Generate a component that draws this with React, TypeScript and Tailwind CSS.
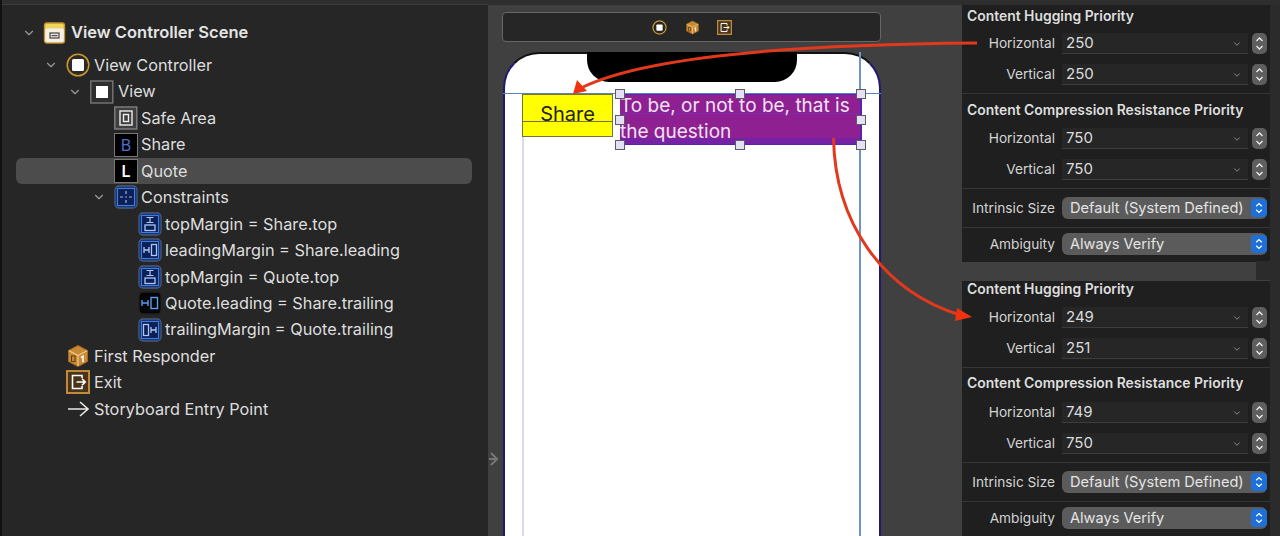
import type { ReactNode } from 'react'
import { ChevronDown } from 'lucide-react'

const font = "font-['Inter','Liberation_Sans',sans-serif]"

function Glyph({ children, size = 24 }: { children: ReactNode; size?: number }) {
  return (
    <svg width={size} height={size} viewBox="0 0 24 24" fill="none" className="shrink-0">
      {children}
    </svg>
  )
}

function SceneIcon() {
  return (
    <Glyph>
      <rect x="1.5" y="2" width="20" height="20" rx="2.5" fill="#e9cf86" stroke="#c9912c" strokeWidth="1.4" />
      <rect x="2.2" y="7.5" width="18.6" height="13.8" rx="1.5" fill="#f4f0e4" />
      <path d="M4 6.5 6 3M8.5 6.5l2-3.5M13 6.5l2-3.5M17.5 6.5l2-3.5" stroke="#f7e600" strokeWidth="1.4" />
      <rect x="7" y="12" width="9" height="5" fill="#ece7d8" stroke="#444" strokeWidth="1.2" />
      <rect x="8.5" y="14" width="6" height="1.2" fill="#555" />
    </Glyph>
  )
}

function ControllerIcon() {
  return (
    <Glyph>
      <circle cx="12" cy="12" r="10.8" fill="#2c2a24" stroke="#c9982f" strokeWidth="1.5" />
      <rect x="6" y="6" width="12" height="12" rx="1.5" fill="#fff" />
    </Glyph>
  )
}

function ViewIcon() {
  return (
    <Glyph>
      <rect x="0.8" y="1" width="22" height="22" fill="#2e2e2e" stroke="#777" strokeWidth="1.4" />
      <rect x="6" y="6" width="12" height="12" fill="#fff" />
    </Glyph>
  )
}

function SafeAreaIcon() {
  return (
    <Glyph>
      <rect x="0.8" y="1" width="22" height="22" fill="#3f3f3f" stroke="#808080" strokeWidth="1.4" />
      <rect x="6" y="5" width="12" height="14" stroke="#eee" strokeWidth="1.4" />
      <rect x="9.5" y="8.5" width="5" height="7" stroke="#eee" strokeWidth="1.4" />
    </Glyph>
  )
}

function LetterIcon({ letter, color }: { letter: string; color: string }) {
  return (
    <span
      className={`flex h-[24px] w-[24px] shrink-0 items-center justify-center border-[1.5px] border-[#777] bg-black text-[16px] ${color}`}
    >
      {letter}
    </span>
  )
}

function ConstraintBox({ children, dark }: { children: ReactNode; dark?: boolean }) {
  return (
    <Glyph>
      <rect
        x="1"
        y="1"
        width="22"
        height="22"
        rx="4"
        fill={dark ? '#050505' : '#0d1f57'}
        stroke={dark ? '#222' : '#4a5d80'}
        strokeWidth="1.3"
      />
      {!dark && <rect x="3.4" y="3.4" width="17.2" height="17.2" stroke="#3c7de0" strokeWidth="1.3" />}
      {children}
    </Glyph>
  )
}

function ConstraintsIcon() {
  return (
    <ConstraintBox>
      <path d="M12 6v3M12 15v3M6 12h3M15 12h3" stroke="#8fb4f0" strokeWidth="1.2" />
      <circle cx="12" cy="12" r="0.8" fill="#8fb4f0" />
    </ConstraintBox>
  )
}

function TopIcon() {
  return (
    <ConstraintBox>
      <path d="M8.5 5.5h7M8.5 10.5h7M12 5.5v5" stroke="#a9c8f5" strokeWidth="1.2" />
      <rect x="7" y="13" width="10" height="5.5" stroke="#a9c8f5" strokeWidth="1.3" />
    </ConstraintBox>
  )
}

function LeadingIcon() {
  return (
    <ConstraintBox>
      <path d="M6 9v6M11 9v6M6 12h5" stroke="#a9c8f5" strokeWidth="1.3" />
      <rect x="13.5" y="6.5" width="5" height="11" stroke="#a9c8f5" strokeWidth="1.3" />
    </ConstraintBox>
  )
}

function SiblingIcon() {
  return (
    <ConstraintBox dark>
      <path d="M4 9v6M10 9v6M4 12h6" stroke="#5b9bf0" strokeWidth="1.4" />
      <rect x="13" y="6.5" width="6.5" height="11" stroke="#5b9bf0" strokeWidth="1.4" />
    </ConstraintBox>
  )
}

function TrailingIcon() {
  return (
    <ConstraintBox>
      <rect x="5.5" y="6.5" width="5" height="11" stroke="#a9c8f5" strokeWidth="1.3" />
      <path d="M13 9v6M18 9v6M13 12h5" stroke="#a9c8f5" strokeWidth="1.3" />
    </ConstraintBox>
  )
}

function CubeIcon({ size = 24 }: { size?: number }) {
  return (
    <Glyph size={size}>
      <path d="M12 1.5 21.5 6.5v11L12 22.5 2.5 17.5v-11z" fill="#c98a35" stroke="#a8691d" strokeWidth="1" />
      <path d="M3 6.8 12 11.5l9-4.7" stroke="#f0c78a" strokeWidth="1.2" />
      <path d="M12 11.5V22" stroke="#f0c78a" strokeWidth="1.2" />
      <rect x="5.5" y="12" width="3.5" height="5.5" stroke="#5a3a10" strokeWidth="1" />
      <path d="M15 13.5l2-1.2v6" stroke="#fff" strokeWidth="1.5" />
    </Glyph>
  )
}

function ExitIcon({ size = 24 }: { size?: number }) {
  return (
    <Glyph size={size}>
      <rect x="1" y="1" width="22" height="22" fill="#4a3318" stroke="#c08a3c" strokeWidth="2" />
      <path d="M16 8V5.5H6.5v13H16V16" stroke="#fff" strokeWidth="1.6" />
      <path d="M10.5 12H19M16 8.8 19.2 12 16 15.2" stroke="#fff" strokeWidth="1.6" />
    </Glyph>
  )
}

function EntryIcon() {
  return (
    <Glyph>
      <path d="M2 12h20M14 5l8 7-8 7" stroke="#e8e8e8" strokeWidth="1.6" />
    </Glyph>
  )
}

type TreeRow = {
  label: string
  indent: string
  icon: ReactNode
  open?: boolean
  selected?: boolean
  wide?: boolean
}

const rows: TreeRow[] = [
  { label: 'View Controller', indent: 'pl-[30px]', icon: <ControllerIcon />, open: true, wide: true },
  { label: 'View', indent: 'pl-[54px]', icon: <ViewIcon />, open: true, wide: true },
  { label: 'Safe Area', indent: 'pl-[78px]', icon: <SafeAreaIcon /> },
  { label: 'Share', indent: 'pl-[78px]', icon: <LetterIcon letter="B" color="text-[#4d6fd0]" /> },
  { label: 'Quote', indent: 'pl-[78px]', icon: <LetterIcon letter="L" color="font-semibold text-white" />, selected: true },
  { label: 'Constraints', indent: 'pl-[78px]', icon: <ConstraintsIcon />, open: true },
  { label: 'topMargin = Share.top', indent: 'pl-[102px]', icon: <TopIcon /> },
  { label: 'leadingMargin = Share.leading', indent: 'pl-[102px]', icon: <LeadingIcon /> },
  { label: 'topMargin = Quote.top', indent: 'pl-[102px]', icon: <TopIcon /> },
  { label: 'Quote.leading = Share.trailing', indent: 'pl-[102px]', icon: <SiblingIcon /> },
  { label: 'trailingMargin = Quote.trailing', indent: 'pl-[102px]', icon: <TrailingIcon /> },
  { label: 'First Responder', indent: 'pl-[30px]', icon: <CubeIcon />, wide: true },
  { label: 'Exit', indent: 'pl-[30px]', icon: <ExitIcon />, wide: true },
  { label: 'Storyboard Entry Point', indent: 'pl-[30px]', icon: <EntryIcon />, wide: true },
]

function OutlineRow({ row }: { row: TreeRow }) {
  return (
    <div
      className={`ml-[16px] flex h-[26.45px] w-[456px] items-center rounded-[6px] ${row.indent} ${
        row.selected ? 'bg-[#4c4c4c]' : ''
      }`}
    >
      <span className="flex w-[20px] shrink-0 items-center">
        {row.open && <ChevronDown size={14} strokeWidth={2} className="-ml-[2px] text-[#9a9a9a]" />}
      </span>
      {row.icon}
      <span className={`whitespace-nowrap text-[16.3px] text-[#dedede] ${row.wide ? 'ml-[4px]' : 'ml-[3px]'}`}>{row.label}</span>
    </div>
  )
}

function Stepper() {
  return (
    <span className="flex h-[21px] w-[15px] shrink-0 flex-col items-center justify-center rounded-[5px] bg-[#5e5e5e]">
      <svg width="9" height="15" viewBox="0 0 9 15" fill="none">
        <path d="M1.5 5 4.5 2l3 3M1.5 10l3 3 3-3" stroke="#eee" strokeWidth="1.3" />
      </svg>
    </span>
  )
}

function Combo({ label, value }: { label: string; value: string }) {
  return (
    <div className="flex h-[31px] items-center">
      <span className="w-[100px] pr-[7px] text-right text-[13.7px] text-[#d4d4d4]">{label}</span>
      <span className="flex h-[21px] w-[186px] items-center justify-between border-b border-[#3d3d3d] bg-[#262626] pt-[1px] pr-[6px] pl-[4px] text-[15px] text-[#dcdcdc]">
        {value}
        <ChevronDown size={10} strokeWidth={2} className="text-[#9c9c9c]" />
      </span>
      <span className="ml-[4px]">
        <Stepper />
      </span>
    </div>
  )
}

function Popup({ label, value, height }: { label: string; value: string; height: string }) {
  return (
    <div className={`flex items-center ${height}`}>
      <span className="w-[100px] pr-[7px] text-right text-[13.7px] text-[#d4d4d4]">{label}</span>
      <span className="flex h-[22px] w-[205px] items-center justify-between rounded-[6px] bg-[#5b5b5b] pl-[8px] text-[14.6px] text-[#e4e4e4]">
        <span className="pt-[1px]">{value}</span>
        <span className="flex h-[18px] w-[16px] items-center justify-center rounded-[4px] bg-[#1f6fd8]">
          <svg width="8" height="12" viewBox="0 0 8 12" fill="none">
            <path d="M1.2 4.2 4 1.6l2.8 2.6M1.2 7.8 4 10.4l2.8-2.6" stroke="#fff" strokeWidth="1.3" />
          </svg>
        </span>
      </span>
    </div>
  )
}

function PriorityBlock({ title, first, second, titleBox }: { title: string; first: string; second: string; titleBox: string }) {
  return (
    <div className="border-b border-[#363636] pb-[3px]">
      <div className={`flex items-center pl-[5px] text-[13.9px] font-semibold text-[#dedede] ${titleBox}`}>{title}</div>
      <Combo label="Horizontal" value={first} />
      <Combo label="Vertical" value={second} />
    </div>
  )
}

function SizePanel({ values, topTitle, lowerTitle }: { values: string[]; topTitle: string; lowerTitle: string }) {
  return (
    <section className="w-[308px] bg-[#1f1f1f] pb-[2px]">
      <PriorityBlock title="Content Hugging Priority" first={values[0]} second={values[1]} titleBox={topTitle} />
      <PriorityBlock title="Content Compression Resistance Priority" first={values[2]} second={values[3]} titleBox={lowerTitle} />
      <div className="border-b border-[#363636]">
        <Popup label="Intrinsic Size" value="Default (System Defined)" height="h-[38px]" />
      </div>
      <Popup label="Ambiguity" value="Always Verify" height="h-[32px]" />
    </section>
  )
}

function Handle({ place }: { place: string }) {
  return <span className={`absolute h-[10px] w-[10px] border-[1.5px] border-[#5c5c66] bg-[#e6e0f4] ${place}`} />
}

export default function App() {
  return (
    <div className={`relative flex h-[536px] w-[1280px] overflow-hidden bg-[#404040] ${font}`}>
      {/* Outline */}
      <aside className="h-full w-[488px] shrink-0 border-l-2 border-[#111] bg-[#262626]">
        <div className="h-[5px] border-b border-[#3c3c3c] bg-[#2e2e2e]" />
        <div className="flex h-[47px] items-center pt-[8px] pl-[20px]">
          <span className="flex w-[21px] shrink-0 items-center">
            <ChevronDown size={14} strokeWidth={2} className="text-[#9a9a9a]" />
          </span>
          <SceneIcon />
          <span className="ml-[4px] text-[16.5px] font-semibold text-[#e4e4e4]">View Controller Scene</span>
        </div>
        <div className="-ml-[2px]">
          {rows.map((row, i) => (
            <OutlineRow key={i} row={row} />
          ))}
        </div>
      </aside>

      {/* Canvas */}
      <main className="relative w-[474px] shrink-0 border-t-[5px] border-[#2e2e2e]">
        <div className="mt-[7px] ml-[14px] flex h-[30px] w-[379px] items-center justify-center gap-[17px] rounded-[4px] border border-[#666] bg-[#262626]">
          <span className="flex w-[16px] justify-center">
            <svg width="15" height="15" viewBox="0 0 24 24" fill="none">
              <circle cx="12" cy="12" r="10.5" stroke="#c9982f" strokeWidth="2" />
              <rect x="7" y="7" width="10" height="10" rx="1.5" fill="#fff" />
            </svg>
          </span>
          <CubeIcon size={15} />
          <ExitIcon size={15} />
        </div>

        <svg width="10" height="16" viewBox="0 0 10 16" fill="none" className="absolute top-[446px] left-[1px]">
          <path d="M2 2l6 6-6 6M8 8H0" stroke="#777" strokeWidth="2" />
        </svg>

        {/* Device */}
        <div className="absolute top-[47px] left-[15px] h-[500px] w-[378px] rounded-t-[36px] border-x-2 border-t-2 border-x-[#1f1a70] border-t-[#111] bg-white">
          <div className="absolute top-[-2px] left-[82px] h-[30px] w-[210px] rounded-b-[22px] bg-black" />
          <div className="absolute top-[39px] left-[-2px] h-[1px] w-[378px] bg-[#5b83c4]" />
          <div className="absolute top-[40px] bottom-0 left-[17px] w-[2px] bg-[#d9d9f0]" />
          <div className="absolute top-[-2px] bottom-0 left-[354px] w-[2px] bg-[#6f93c9]" />

          <div className="absolute top-[40px] left-[17px] flex h-[43px] w-[91px] items-center justify-center border border-[#73733a] bg-[#ffff00] pb-[3px] text-[20px] leading-none text-[#222]">
            Share
            <span className="absolute top-[26px] right-0 left-0 h-[1px] bg-[#73733a]" />
          </div>

          <div className="absolute top-[40px] left-[115px] h-[51px] w-[242px] border-y border-r-2 border-[#5a22b0] bg-[#8e2092] text-[19px] leading-[26px] whitespace-nowrap text-[#f0e2f5]">
            <span className="absolute top-[18px] right-0 left-0 h-[1px] bg-[#7b2bb0]" />
            <span className="absolute top-[43px] right-0 bottom-0 left-0 bg-[#7622a4]" />
            <div className="relative -mt-[2px]">
              To be, or not to be, that is
              <br />
              the question
            </div>
          </div>

          <Handle place="top-[35px] left-[110px]" />
          <Handle place="top-[35px] left-[230px]" />
          <Handle place="top-[35px] left-[351px]" />
          <Handle place="top-[61px] left-[110px]" />
          <Handle place="top-[61px] left-[351px]" />
          <Handle place="top-[86px] left-[110px]" />
          <Handle place="top-[86px] left-[230px]" />
          <Handle place="top-[86px] left-[351px]" />
        </div>
      </main>

      {/* Size inspector */}
      <aside className="flex h-full flex-1 flex-col border-t-[5px] border-[#2e2e2e]">
        <SizePanel values={['250', '250', '750', '750']} topTitle="h-[23px]" lowerTitle="h-[29px] pt-[4px]" />
        <div className="h-[19px] w-[294px]" />
        <SizePanel values={['249', '251', '749', '750']} topTitle="h-[21px] pb-[4px]" lowerTitle="h-[29px] pt-[2px]" />
      </aside>
      <div className="absolute top-[5px] right-0 bottom-0 w-[10px] bg-[#2b2b2b]" />
      <div className="absolute top-[261px] right-[10px] h-[19px] w-[14px] bg-[#2b2b2b]" />

      {/* Annotation arrows */}
      <svg width="1280" height="536" viewBox="0 0 1280 536" fill="none" className="pointer-events-none absolute top-0 left-0">
        <path d="M977 43C850 44 660 50 583 87" stroke="#e2391c" strokeWidth="3" />
        <path d="M573 94 577 80 587 91Z" fill="#f0320f" />
        <path d="M833.5 138C835 220 880 290 960 315" stroke="#e2391c" strokeWidth="3" />
        <path d="M972 317 957 308 955 321Z" fill="#f0320f" />
      </svg>
    </div>
  )
}
